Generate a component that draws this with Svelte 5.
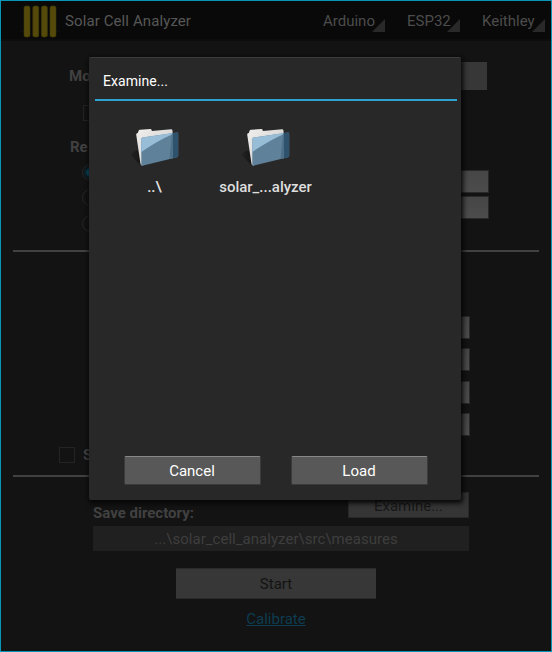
<script>
  const menus = [
    { label: 'Arduino', width: 62 },
    { label: 'ESP32', width: 53 },
    { label: 'Keithley', width: 63 }
  ];
  const entries = ['..\\', 'solar_...alyzer'];
  const fields = [1, 2, 3, 4];
</script>

<div class="window">
  <header>
    <svg class="logo" width="40" height="34" viewBox="0 0 40 34">
      <path d="M0 26h4M36 26h4" stroke="#111" stroke-width="1.5" />
      {#each [4, 12.8, 21.4, 30] as x}
        <rect {x} y="1" width="6" height="31" rx="1.8" fill="#554a0a" stroke="#3d3608" stroke-width=".6" />
      {/each}
    </svg>
    <span class="title">Solar Cell Analyzer</span>
    <nav>
      {#each menus as menu}
        <span class="menu" style="width: {menu.width}px">{menu.label}<i></i></span>
      {/each}
    </nav>
  </header>

  <main>
    <div class="row mode"><b>Mo</b><span class="select"></span></div>
    <div class="box first"></div>
    <b class="resistance">Re</b>
    <div class="options">
      <div class="radios"><i class="radio on"></i><i class="radio"></i><i class="radio"></i></div>
      <div class="inputs"><i class="field"></i><i class="field"></i></div>
    </div>
    <hr />
    <div class="params">
      {#each fields as field (field)}<i class="field"></i>{/each}
    </div>
    <div class="row save"><span class="box"></span><b>S</b></div>
    <hr />
    <div class="row directory"><b>Save directory:</b><span class="browse">Examine...</span></div>
    <div class="path">...\solar_cell_analyzer\src\measures</div>
    <div class="start">Start</div>
    <span class="link">Calibrate</span>
  </main>

  <section class="dialog">
    <h2>Examine...</h2>
    <div class="files">
      {#each entries as entry, n}
        <div class="entry">
          <svg width="50" height="42" viewBox="0 0 50 42">
            <defs>
              <linearGradient id="paper{n}" x1="0" y1="0" x2="1" y2="1">
                <stop offset="0" stop-color="#f0efee" /><stop offset="1" stop-color="#c9c8c7" />
              </linearGradient>
              <linearGradient id="shade{n}" x1="0" y1="0" x2="1" y2="0">
                <stop offset="0" stop-color="#222" /><stop offset="1" stop-color="#151515" />
              </linearGradient>
            </defs>
            <path d="M1 27Q4 24 8 23L12 39Q8 37 1 28Z" fill="url(#shade{n})" />
            <path d="M6.2 7.5Q6.1 6.2 7.8 6L8.5 4Q8.8 2.9 10 2.8L20.3 2Q21.3 1.9 21.6 3L21.9 3.9L41 2.2Q42.2 2.1 42.4 3.3L43 9L13 38.3Q11 39 10.5 37Z" fill="url(#paper{n})" />
            <path d="M12.5 10.6L47 5.6Q48.2 5.5 48.2 6.7V28.8Q48.2 30 47 30.3L12.3 38.7Q11.3 38.9 11.3 37.9V12Q11.3 10.8 12.5 10.6Z" fill="#5f8199" />
            <path d="M12.5 10.6L43.5 6.1L42 7.5Q29 13 11.3 25V12Q11.3 10.8 12.5 10.6Z" fill="#98bdd7" />
            <path d="M42 6.3L43.2 6.2V31.2L39.5 32.1Z" fill="#4d6f88" />
            <path d="M43 6.2L47 5.6Q48.2 5.5 48.2 6.7V28.8Q48.2 30 47 30.3L43 31.3Z" fill="#2f526c" />
          </svg>
          <span>{entry}</span>
        </div>
      {/each}
    </div>
    <footer><button>Cancel</button><button>Load</button></footer>
  </section>
</div>

<style>
  :global(body) { background: #131313; }
  .window {
    position: relative;
    box-sizing: border-box;
    width: 552px;
    height: 652px;
    overflow: hidden;
    border: 1px solid #0796b7;
    background: #131313;
    color: #414141;
    font: 15px/20px Roboto, sans-serif;
  }
  header {
    display: flex;
    height: 40px;
    box-sizing: border-box;
    background: #090909;
    border-bottom: 2px solid #0c0c0c;
  }
  .logo { margin: 4px 0 0 19px; }
  .title { margin: 10px 0 0 5px; color: #575757; letter-spacing: 0.1px; }
  nav { display: flex; gap: 22px; margin: 10px 6px 0 auto; color: #4c4c4c; }
  .menu { display: flex; justify-content: space-between; height: 21px; white-space: nowrap; }
  .menu i {
    flex: none;
    width: 13px;
    height: 13px;
    margin: 8px 0 0 -13px;
    background: #292929;
    clip-path: polygon(100% 0, 100% 100%, 0 100%);
  }
  main { display: flex; flex-direction: column; }
  .row { display: flex; }
  .mode { height: 28px; margin: 21px 64px 0 68px; align-items: center; justify-content: space-between; }
  .select { width: 100px; height: 28px; background: #373737; }
  .box { box-sizing: border-box; width: 16px; height: 16px; border: 1px solid #242424; }
  .first { margin: 15px 0 0 82px; }
  .resistance { margin: 16px 0 0 69px; }
  .options { display: flex; justify-content: space-between; margin: 6px 62px 0 81px; height: 70px; }
  .radios { display: flex; flex-direction: column; gap: 8.5px; padding-top: 0.5px; }
  .radio { box-sizing: border-box; width: 17px; height: 17px; border: 1px solid #262626; border-radius: 50%; }
  .radio.on { background: radial-gradient(circle, #07506a 0 3px, #0b222c 5px, #131313 8px); }
  .inputs { display: flex; flex-direction: column; gap: 3px; height: 49px; margin-top: 7px; }
  .field {
    box-sizing: border-box;
    width: 70px;
    height: 23px;
    border: 1px solid #292929;
    border-left: 0;
    background: linear-gradient(#464646, #4c4c4c);
  }
  hr { width: 526px; height: 2px; margin: 17px 0 0 12px; border: 0; background: #414141; }
  .params { display: flex; flex-direction: column; align-items: flex-end; gap: 9.4px; margin: 64px 81px 0 0; }
  .save { margin: 11px 0 0 58px; gap: 8px; height: 16px; align-items: center; }
  .save + hr { margin-top: 12px; }
  .directory { height: 26px; margin: 15px 82px 0 92px; justify-content: space-between; }
  .directory b { margin-top: 11px; }
  .browse {
    box-sizing: border-box;
    width: 121px;
    height: 26px;
    padding-top: 3px;
    border: 1px solid #282828;
    background: #353535;
    color: #171717;
    text-align: center;
  }
  .path { height: 25px; margin: 8px 82px 0 92px; padding-right: 10px; background: #202020; color: #3e3e3e; line-height: 26px; text-align: center; letter-spacing: 0.03px; }
  .start {
    box-sizing: border-box;
    width: 200px;
    height: 31px;
    margin: 17px 0 0 175px;
    border: 1px solid #2a2a2a;
    border-width: 1px 0;
    background: #373737;
    color: #131313;
    line-height: 30px;
    text-align: center;
  }
  .link { align-self: center; margin-top: 10px; color: #0d3c50; text-decoration: underline; }
  .dialog {
    position: absolute;
    left: 88px;
    top: 56px;
    box-sizing: border-box;
    display: flex;
    flex-direction: column;
    width: 372px;
    height: 443px;
    padding: 0 4px 15px 6px;
    border-top: 1px solid #3b3b3b;
    border-radius: 2px;
    background: #282828;
    box-shadow: 1px 2px 5px 1px #050505;
    color: #fff;
  }
  h2 { margin: 0; height: 41px; padding-left: 8px; border-bottom: 2px solid #2fa4d3; font-size: 14px; font-weight: 400; line-height: 47px; letter-spacing: 0.05px; }
  .files { display: flex; flex: 1; padding: 26px 0 0 4px; }
  .entry { display: flex; flex-direction: column; align-items: center; width: 111px; color: #dedede; font-weight: 500; }
  .entry span { margin-top: 8px; }
  footer { display: flex; gap: 30px; padding-left: 29px; }
  button {
    box-sizing: border-box;
    width: 137px;
    height: 29px;
    padding: 0 1px 0 0;
    border: 1px solid #3b3b3b;
    border-top-color: #888;
    border-radius: 2px;
    background: #585858;
    color: #fff;
    font: inherit;
  }
</style>
